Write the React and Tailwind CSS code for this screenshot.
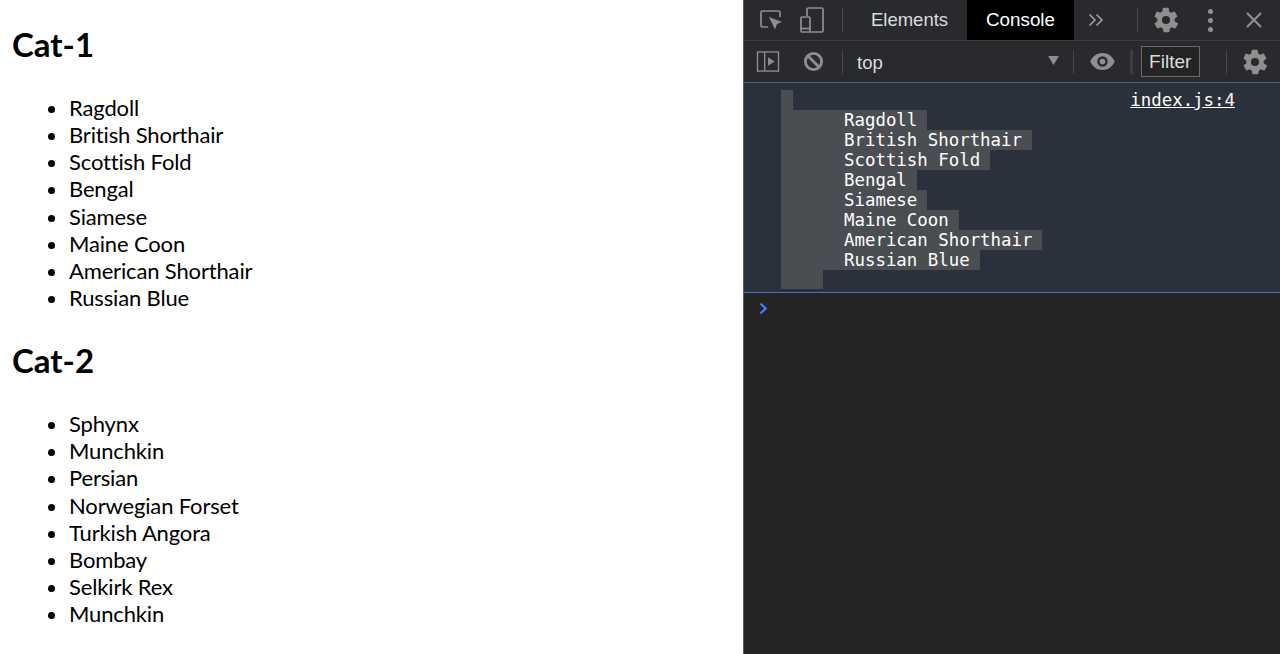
const cat1 = ["Ragdoll","British Shorthair","Scottish Fold","Bengal","Siamese","Maine Coon","American Shorthair","Russian Blue"];
const cat2 = ["Sphynx","Munchkin","Persian","Norwegian Forset","Turkish Angora","Bombay","Selkirk Rex","Munchkin"];

function Cat({ title, items }) {
  return (
    <section>
      <h1 className="text-[33px] font-bold leading-[40px]">{title}</h1>
      <ul className="mt-[30px] list-disc pl-[57px] text-[22px] leading-[27.14px] tracking-[-0.15px]">
        {items.map((c, i) => <li key={i}>{c}</li>)}
      </ul>
    </section>
  );
}

const Gear = ({ cls }) => (
  <svg viewBox="0 0 24 24" className={cls} fill="#8f8f8f">
    <path fillRule="evenodd" d="M19.4 13a7.6 7.6 0 0 0 0-2l2.2-1.7a.5.5 0 0 0 .1-.7l-2.1-3.6a.5.5 0 0 0-.6-.2l-2.6 1a7.6 7.6 0 0 0-1.7-1l-.4-2.8a.5.5 0 0 0-.5-.4H9.7a.5.5 0 0 0-.5.4l-.4 2.8a7.6 7.6 0 0 0-1.7 1l-2.6-1a.5.5 0 0 0-.6.2L2.3 8.6a.5.5 0 0 0 .1.7L4.6 11a7.6 7.6 0 0 0 0 2l-2.2 1.7a.5.5 0 0 0-.1.7l2.1 3.6a.5.5 0 0 0 .6.2l2.6-1a7.6 7.6 0 0 0 1.7 1l.4 2.8a.5.5 0 0 0 .5.4h4.2a.5.5 0 0 0 .5-.4l.4-2.8a7.6 7.6 0 0 0 1.7-1l2.6 1a.5.5 0 0 0 .6-.2l2.1-3.6a.5.5 0 0 0-.1-.7zM12 15.5a3.5 3.5 0 1 1 0-7 3.5 3.5 0 0 1 0 7z" />
  </svg>
);

const Sep = ({ cls = "" }) => <div className={`h-[24px] w-px shrink-0 bg-[#45474a] ${cls}`} />;

export default function App() {
  return (
    <div className="flex h-[654px] w-[1280px] overflow-hidden bg-white" style={{ fontFamily: 'Lato, "Noto Sans", sans-serif' }}>
      <main className="w-[743px] shrink-0 pl-3 pt-[24px] text-black">
        <Cat title="Cat-1" items={cat1} />
        <div className="h-[29px]" />
        <Cat title="Cat-2" items={cat2} />
      </main>

      <aside className="flex w-[537px] flex-col border-l border-[#5f6165] bg-[#242424]" style={{ fontFamily: '"Liberation Sans", Arial, sans-serif' }}>
        <div className="flex h-[41px] items-center border-b border-[#3d3e41] bg-[#292a2d]">
          <svg viewBox="0 0 24 24" className="ml-[15px] h-[24px] w-[24px] shrink-0" fill="none">
            <path d="M9 19H3.500a1.500 1.500 0 0 1-1.500-1.500V4.500A1.500 1.500 0 0 1 3.500 3h16A1.500 1.500 0 0 1 21 4.500V9" stroke="#8f8f8f" strokeWidth="1.7" />
            <path d="M10 9l13 5-5 2-2 5.500z" fill="#8f8f8f" />
          </svg>
          <svg viewBox="0 0 24 26" className="ml-[17px] h-[26px] w-[24px] shrink-0" fill="none" stroke="#8f8f8f" strokeWidth="1.7">
            <path d="M7 9V2.500A1.500 1.500 0 0 1 8.500 1h13A1.500 1.500 0 0 1 23 2.500v21a1.500 1.500 0 0 1-1.500 1.500H10" />
            <rect x="1" y="10" width="9" height="15" rx="1" />
            <path d="M1 21.500h9" />
          </svg>
          <Sep cls="ml-[18px]" />
          <div className="ml-[9px] flex h-[40px] w-[115px] shrink-0 items-center justify-center text-[18.500px] text-[#dcdcdc]">Elements</div>
          <div className="flex h-[40px] w-[107px] shrink-0 items-center justify-center bg-black text-[18.800px] text-white">Console</div>
          <span className="ml-[14px] flex h-[24px] w-[16px] shrink-0 items-center">
            <svg viewBox="0 0 16 14" className="h-[14px] w-[16px]" fill="none" stroke="#a0a0a0" strokeWidth="1.6">
              <path d="M1.500 1.500L7 7l-5.500 5.500M8.500 1.500L14 7l-5.500 5.500" />
            </svg>
          </span>
          <Sep cls="ml-[33px]" />
          <Gear cls="ml-[14px] h-[28px] w-[28px] shrink-0" />
          <div className="ml-[28px] flex shrink-0 flex-col gap-[4px]">
            <span className="h-[5px] w-[5px] rounded-full bg-[#8f8f8f]" />
            <span className="h-[5px] w-[5px] rounded-full bg-[#8f8f8f]" />
            <span className="h-[5px] w-[5px] rounded-full bg-[#8f8f8f]" />
          </div>
          <svg viewBox="0 0 16 16" className="ml-[33px] h-[16px] w-[16px] shrink-0" stroke="#8f8f8f" strokeWidth="2.200">
            <path d="M1 1l14 14M15 1L1 15" />
          </svg>
        </div>

        <div className="flex h-[41px] items-center bg-[#292a2d]">
          <svg viewBox="0 0 24 22" className="ml-[12px] h-[21px] w-[24px] shrink-0" fill="none" stroke="#8f8f8f" strokeWidth="1.4">
            <rect x="1" y="1" width="22" height="20" />
            <path d="M8.500 1v20" />
            <path d="M12 6.500l7 4.500-7 4.500z" fill="#8f8f8f" stroke="none" />
          </svg>
          <svg viewBox="0 0 22 22" className="ml-[23px] h-[21px] w-[21px] shrink-0" fill="none" stroke="#8f8f8f" strokeWidth="3">
            <circle cx="11" cy="11" r="8.500" />
            <path d="M5 5l12 12" />
          </svg>
          <Sep cls="ml-[18px]" />
          <span className="ml-[14px] pt-[2px] text-[18.500px] text-[#dcdcdc]">top</span>
          <svg viewBox="0 0 12 10" className="ml-[165px] h-[9px] w-[11px] shrink-0 -translate-y-[1px]" fill="#8f8f8f"><path d="M0 0h12L6 10z" /></svg>
          <Sep cls="ml-[14px]" />
          <svg viewBox="0 0 26 18" className="ml-[16px] h-[17px] w-[25px] shrink-0" fill="#8f8f8f">
            <path fillRule="evenodd" d="M13 0C7 0 2.500 3.500 0 9c2.500 5.500 7 9 13 9s10.500-3.500 13-9c-2.500-5.500-7-9-13-9zm0 14.500a5.500 5.500 0 1 1 0-11 5.500 5.500 0 0 1 0 11zM13 6a3 3 0 1 0 0 6 3 3 0 0 0 0-6z" />
          </svg>
          <div className="ml-[15px] h-[24px] w-[3px] shrink-0 bg-[#3d3e41]" />
          <div className="ml-[8px] flex h-[31px] w-[59px] shrink-0 items-center justify-center border border-[#6b6b6b] bg-[#242424] pt-[2px] text-[19px] text-[#dcdcdc]">Filter</div>
          <Sep cls="ml-[26px]" />
          <Gear cls="ml-[14px] h-[28px] w-[28px] shrink-0" />
        </div>

        <div className="relative h-[211px] border-y border-t-[#55606f] border-b-[#4a74b4] bg-[#2b313c]">
          <a className="absolute right-[45px] top-[7px] text-[17.400px] leading-[20px] text-white underline" style={{ fontFamily: '"DejaVu Sans Mono", monospace' }}>index.js:4</a>
          <div className="ml-[37px] mt-[7px] flex flex-col text-[17.400px] leading-[20px] text-white" style={{ fontFamily: '"DejaVu Sans Mono", monospace' }}>
            <div className="h-[20px] w-[12px] bg-[#4a4d52]" />
            {cat1.map((c, i) => (
              <div key={i} className="h-[20px] w-fit whitespace-pre bg-[#4a4d52] pl-[63px] pr-[10px]">{c}</div>
            ))}
            <div className="h-[19px] w-[42px] bg-[#4a4d52]" />
          </div>
        </div>

        <div className="flex-1 bg-[#242424] pl-[15px] pt-[9px]">
          <svg viewBox="0 0 10 14" className="h-[13px] w-[9px]" fill="none" stroke="#3b82f6" strokeWidth="2.400">
            <path d="M1.500 1.500L7.500 7l-6 5.500" />
          </svg>
        </div>
      </aside>
    </div>
  );
}
